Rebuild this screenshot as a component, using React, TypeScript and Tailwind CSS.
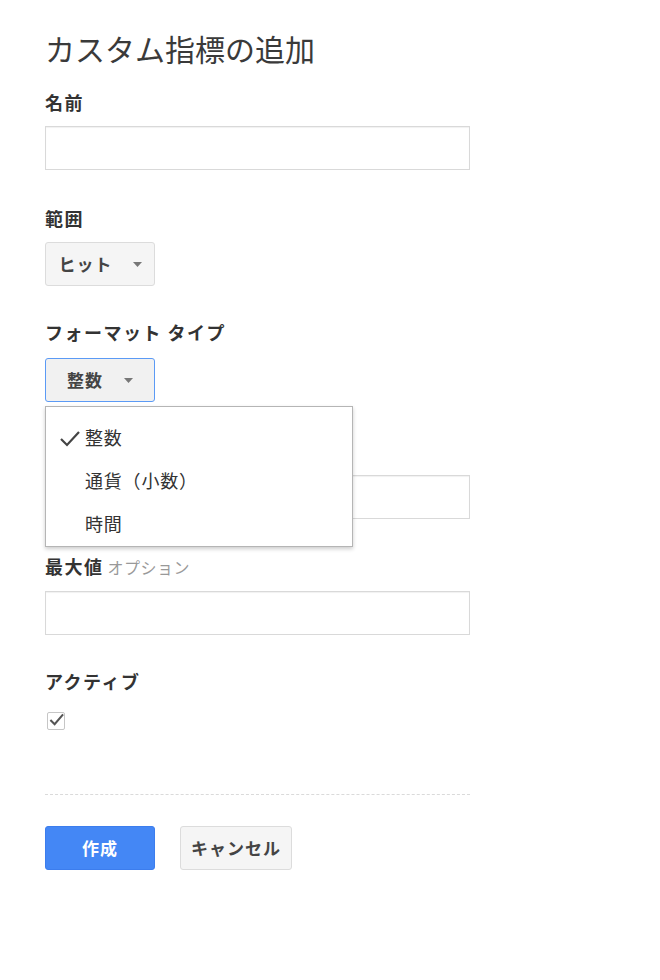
import React from "react"

const font = { fontFamily: '"Noto Sans CJK JP", "Noto Sans", sans-serif' }

function Caret() {
  return (
    <svg width="9" height="5" viewBox="0 0 9 5" className="shrink-0">
      <path d="M0 0 L9 0 L4.5 5 Z" fill="#777" />
    </svg>
  )
}

function TextInput() {
  return <div className="h-[44px] w-[425px] border border-[#d9d9d9] bg-white shadow-[inset_0_1px_1px_rgba(0,0,0,0.06)]" />
}

function Label({ children, className = "" }: { children?: React.ReactNode; className?: string }) {
  return (
    <div className={`h-[20px] leading-[20px] text-[18px] font-bold tracking-[1.5px] text-[#333] ${className}`}>
      {children}
    </div>
  )
}

function Optional() {
  return <span className="ml-[4px] text-[16px] font-normal tracking-[0.5px] text-[#999]">オプション</span>
}

export default function App() {
  const options = ["整数", "通貨（小数）", "時間"]

  return (
    <div className="min-h-screen bg-white pl-[45px] pt-[28px]" style={font}>
      <h1 className="h-[40px] leading-[40px] text-[30px] font-normal text-[#3a3a3a]">カスタム指標の追加</h1>

      <Label className="mt-[24px]">名前</Label>
      <div className="mt-[14px]">
        <TextInput />
      </div>

      <Label className="mt-[38px]">範囲</Label>
      <button className="mt-[14px] flex h-[44px] min-w-[110px] items-center justify-center gap-[20px] rounded-[3px] border border-[#dcdcdc] bg-[#f5f5f5] px-[12px] text-[17px] font-bold tracking-[1px] text-[#444]">
        <span>ヒット</span>
        <Caret />
      </button>

      <Label className="mt-[36px]">フォーマット タイプ</Label>
      <div className="relative mt-[16px] w-[110px]">
        <button className="flex h-[44px] w-[110px] items-center justify-center gap-[21px] rounded-[3px] border border-[#5b9af5] bg-[#f1f1f1] px-[12px] text-[17px] font-bold tracking-[1px] text-[#444]">
          <span>整数</span>
          <Caret />
        </button>
        <div className="absolute left-0 top-[48px] z-10 w-[308px] border border-[#b5b5b5] bg-white pt-[9px] pb-[1px] shadow-[0_2px_4px_rgba(0,0,0,0.2)]">
          {options.map((o, i) => (
            <div key={o} className="flex h-[43px] items-center text-[18px] tracking-[0.8px] text-[#333]">
              <span className="flex w-[39px] justify-end pr-[4px]">
                {i === 0 && (
                  <svg width="22" height="18" viewBox="0 0 22 18">
                    <path d="M2 10 L8 16 L20 3" fill="none" stroke="#444" strokeWidth="2.2" />
                  </svg>
                )}
              </span>
              <span>{o}</span>
            </div>
          ))}
        </div>
      </div>

      {/* 最小値 label sits under the open menu */}
      <Label className="mt-[38px]" />
      <div className="mt-[15px]">
        <TextInput />
      </div>

      <Label className="mt-[37px]">
        最大値
        <Optional />
      </Label>
      <div className="mt-[15px]">
        <TextInput />
      </div>

      <Label className="mt-[36px]">アクティブ</Label>
      <div className="mt-[21px] ml-[2px] flex h-[18px] w-[18px] items-center justify-center rounded-[2px] border border-[#c6c6c6] bg-white">
        <svg width="16" height="14" viewBox="0 0 16 14" className="-mt-[2px] ml-[1px]">
          <path d="M1.5 7 L6 11.5 L15 1" fill="none" stroke="#555" strokeWidth="2.2" />
        </svg>
      </div>

      <div className="mt-[64px] w-[425px] border-t border-dashed border-[#dadada]" />

      <div className="mt-[31px] flex gap-[25px]">
        <button className="h-[44px] w-[110px] rounded-[3px] border border-[#3c7ded] bg-[#4487f5] text-[17px] font-bold tracking-[1px] text-white">
          作成
        </button>
        <button className="h-[44px] w-[112px] rounded-[3px] border border-[#dcdcdc] bg-[#f5f5f5] text-[17px] font-bold tracking-[1px] text-[#444]">
          キャンセル
        </button>
      </div>
    </div>
  )
}
